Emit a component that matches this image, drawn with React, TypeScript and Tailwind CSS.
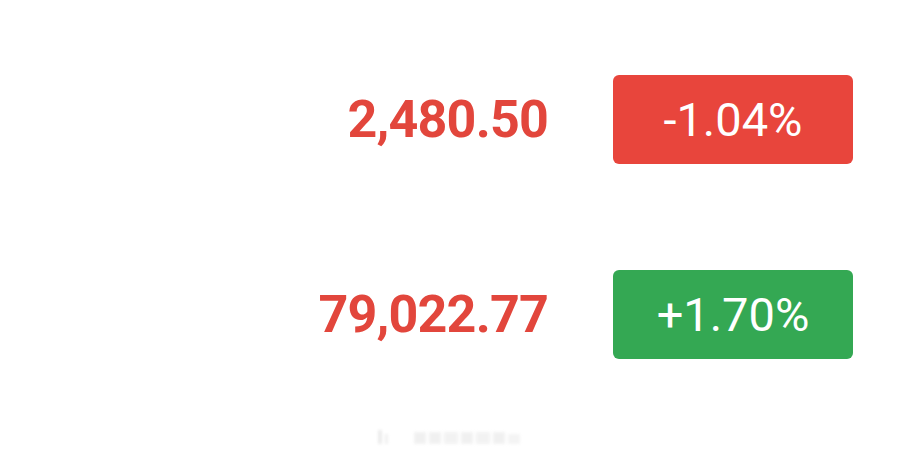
export default function App() {
  const rows = [
    { value: "2,480.50", change: "-1.04%", bg: "bg-[#e8453c]" },
    { value: "79,022.77", change: "+1.70%", bg: "bg-[#34a853]" },
  ];
  return (
    <div
      className="w-[898px] h-[452px] bg-white flex flex-col pt-[75px] pr-[45px] gap-[106px] relative overflow-hidden"
      style={{ fontFamily: "Roboto, 'Liberation Sans', sans-serif" }}
    >
      {rows.map((r) => (
        <div key={r.value} className="flex items-center justify-end gap-[65px]">
          <div className="text-[52px] leading-none font-bold text-[#e2463c] tracking-[-0.8px]">
            {r.value}
          </div>
          <div
            className={`${r.bg} w-[240px] h-[89px] rounded-[6px] flex items-center justify-center text-white text-[47px] leading-none`}
          >
            {r.change}
          </div>
        </div>
      ))}
      <div className="absolute left-[378px] top-[430px] flex items-end gap-[3px] blur-[1.5px] opacity-40">
        <div className="w-[4px] h-[14px] bg-[#cfcfcf]" />
        <div className="w-[3px] h-[10px] bg-[#d8d8d8]" />
        <div className="w-[20px] h-[10px] bg-transparent" />
        <div className="w-[12px] h-[12px] bg-[#dcdcdc]" />
        <div className="w-[12px] h-[12px] bg-[#dcdcdc]" />
        <div className="w-[14px] h-[12px] bg-[#e0e0e0]" />
        <div className="w-[12px] h-[12px] bg-[#dcdcdc]" />
        <div className="w-[14px] h-[12px] bg-[#e0e0e0]" />
        <div className="w-[12px] h-[12px] bg-[#dcdcdc]" />
        <div className="w-[12px] h-[10px] bg-[#e4e4e4]" />
      </div>
    </div>
  );
}
